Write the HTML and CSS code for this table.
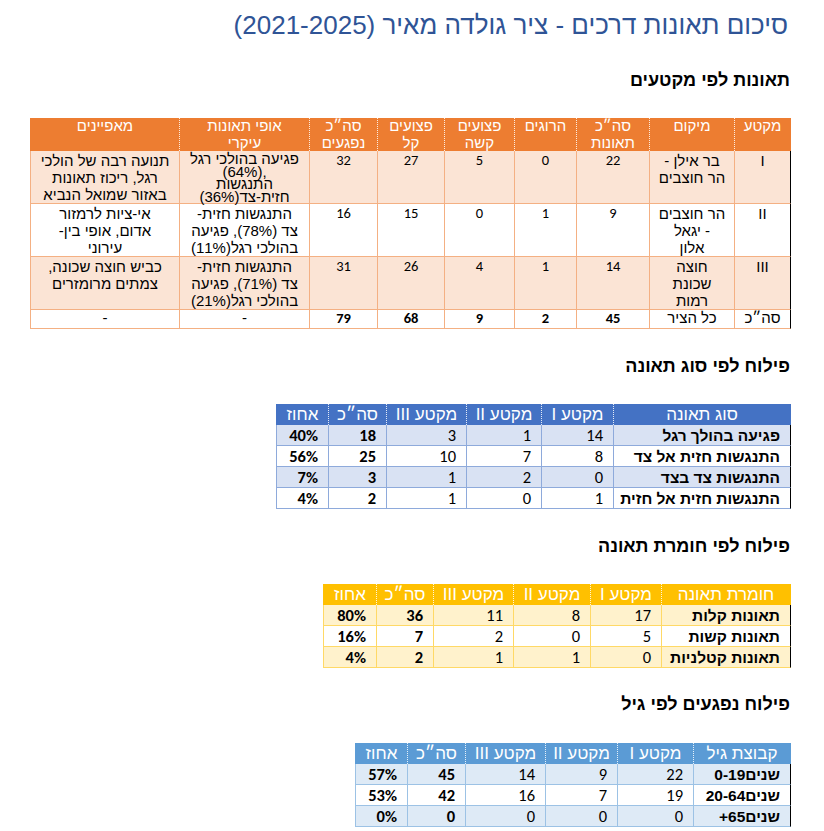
FILE: index.html
```html
<!DOCTYPE html>
<html lang="he" dir="rtl">
<head>
<meta charset="utf-8">
<title>סיכום תאונות דרכים</title>
<link rel="stylesheet" href="styles.css">
</head>
<body>
<main class="page">
  <h1 class="title">סיכום תאונות דרכים - ציר גולדה מאיר (2021-2025)</h1>

  <h2 class="sec sec-first">תאונות לפי מקטעים</h2>
  <table class="tbl t1">
    <colgroup>
      <col style="width:57px"><col style="width:85px"><col style="width:73px"><col style="width:62px"><col style="width:70px"><col style="width:67px"><col style="width:68px"><col style="width:130px"><col style="width:149px">
    </colgroup>
    <thead>
      <tr>
        <th>מקטע</th><th>מיקום</th><th>סה״כ<br>תאונות</th><th>הרוגים</th><th>פצועים<br>קשה</th><th>פצועים<br>קל</th><th>סה״כ<br>נפגעים</th><th>אופי תאונות<br>עיקרי</th><th>מאפיינים</th>
      </tr>
    </thead>
    <tbody>
      <tr class="alt">
        <td>I</td><td>בר אילן -<br>הר חוצבים</td><td class="num">22</td><td class="num">0</td><td class="num">5</td><td class="num">27</td><td class="num">32</td>
        <td class="tight">פגיעה בהולכי רגל<br><bdo dir="ltr">(64%),</bdo><br>התנגשות<br>חזית-צד(36%)</td>
        <td>תנועה רבה של הולכי<br>רגל, ריכוז תאונות<br>באזור שמואל הנביא</td>
      </tr>
      <tr>
        <td>II</td><td>הר חוצבים<br>- יגאל<br>אלון</td><td class="num">9</td><td class="num">1</td><td class="num">0</td><td class="num">15</td><td class="num">16</td>
        <td>התנגשות חזית-<br>צד (78%), פגיעה<br>בהולכי רגל(11%)</td>
        <td>אי-ציות לרמזור<br>אדום, אופי בין-<br>עירוני</td>
      </tr>
      <tr class="alt">
        <td>III</td><td>חוצה<br>שכונת<br>רמות</td><td class="num">14</td><td class="num">1</td><td class="num">4</td><td class="num">26</td><td class="num">31</td>
        <td>התנגשות חזית-<br>צד (71%), פגיעה<br>בהולכי רגל(21%)</td>
        <td>כביש חוצה שכונה,<br>צמתים מרומזרים</td>
      </tr>
      <tr class="total">
        <td>סה״כ</td><td>כל הציר</td><td class="num b">45</td><td class="num b">2</td><td class="num b">9</td><td class="num b">68</td><td class="num b">79</td><td>-</td><td>-</td>
      </tr>
    </tbody>
  </table>

  <h2 class="sec">פילוח לפי סוג תאונה</h2>
  <table class="tbl grid blue t2">
    <colgroup>
      <col style="width:178px"><col style="width:72px"><col style="width:75px"><col style="width:80px"><col style="width:58px"><col style="width:52px">
    </colgroup>
    <thead>
      <tr><th>סוג תאונה</th><th>מקטע I</th><th>מקטע II</th><th>מקטע III</th><th>סה״כ</th><th>אחוז</th></tr>
    </thead>
    <tbody>
      <tr class="alt"><td class="lbl">פגיעה בהולך רגל</td><td class="num">14</td><td class="num">1</td><td class="num">3</td><td class="num b">18</td><td class="num b">40%</td></tr>
      <tr><td class="lbl">התנגשות חזית אל צד</td><td class="num">8</td><td class="num">7</td><td class="num">10</td><td class="num b">25</td><td class="num b">56%</td></tr>
      <tr class="alt"><td class="lbl">התנגשות צד בצד</td><td class="num">0</td><td class="num">2</td><td class="num">1</td><td class="num b">3</td><td class="num b">7%</td></tr>
      <tr><td class="lbl">התנגשות חזית אל חזית</td><td class="num">1</td><td class="num">0</td><td class="num">1</td><td class="num b">2</td><td class="num b">4%</td></tr>
    </tbody>
  </table>

  <h2 class="sec">פילוח לפי חומרת תאונה</h2>
  <table class="tbl grid gold t3">
    <colgroup>
      <col style="width:130px"><col style="width:71px"><col style="width:77px"><col style="width:80px"><col style="width:57px"><col style="width:53px">
    </colgroup>
    <thead>
      <tr><th>חומרת תאונה</th><th>מקטע I</th><th>מקטע II</th><th>מקטע III</th><th>סה״כ</th><th>אחוז</th></tr>
    </thead>
    <tbody>
      <tr class="alt"><td class="lbl">תאונות קלות</td><td class="num">17</td><td class="num">8</td><td class="num">11</td><td class="num b">36</td><td class="num b">80%</td></tr>
      <tr><td class="lbl">תאונות קשות</td><td class="num">5</td><td class="num">0</td><td class="num">2</td><td class="num b">7</td><td class="num b">16%</td></tr>
      <tr class="alt"><td class="lbl">תאונות קטלניות</td><td class="num">0</td><td class="num">1</td><td class="num">1</td><td class="num b">2</td><td class="num b">4%</td></tr>
    </tbody>
  </table>

  <h2 class="sec sec-last">פילוח נפגעים לפי גיל</h2>
  <table class="tbl grid sky t4">
    <colgroup>
      <col style="width:98px"><col style="width:76px"><col style="width:72px"><col style="width:80px"><col style="width:58px"><col style="width:52px">
    </colgroup>
    <thead>
      <tr><th>קבוצת גיל</th><th>מקטע I</th><th>מקטע II</th><th>מקטע III</th><th>סה״כ</th><th>אחוז</th></tr>
    </thead>
    <tbody>
      <tr class="alt"><td class="lbl">שנים0-19</td><td class="num">22</td><td class="num">9</td><td class="num">14</td><td class="num b">45</td><td class="num b">57%</td></tr>
      <tr><td class="lbl">שנים20-64</td><td class="num">19</td><td class="num">7</td><td class="num">16</td><td class="num b">42</td><td class="num b">53%</td></tr>
      <tr class="alt"><td class="lbl">שנים65+</td><td class="num">0</td><td class="num">0</td><td class="num">0</td><td class="num b">0</td><td class="num b">0%</td></tr>
    </tbody>
  </table>
</main>
</body>
</html>
```

FILE: styles.css
```css
html, body {
  margin: 0;
  padding: 0;
  background: #ffffff;
}

body {
  font-family: "Liberation Sans", Arial, sans-serif;
  color: #000000;
}

.page {
  width: 824px;
  box-sizing: border-box;
  padding: 0 33px 0 0;
  direction: rtl;
  overflow: hidden;
}

.title {
  margin: 10px 3px 0 0;
  font-size: 26px;
  line-height: 31px;
  font-weight: normal;
  color: #2F5496;
  white-space: nowrap;
}

.sec {
  margin: 26px 1px 27px 0;
  font-size: 18px;
  line-height: 22px;
  font-weight: bold;
}

.sec-first {
  margin-top: 28px;
}

.sec-last {
  margin-top: 25px;
  margin-bottom: 28px;
}

/* ---------- generic table ---------- */
.tbl {
  border-collapse: separate;
  border-spacing: 0;
  table-layout: fixed;
}

.tbl th {
  font-weight: normal;
  color: #ffffff;
  text-align: center;
  border-left: 1px dotted rgba(255, 255, 255, 0.85);
}

.tbl td {
  border-left: 1px solid;
  border-bottom: 1px solid;
}

.tbl td:first-child {
  border-right: 1px solid;
}

.num {
  font-family: Carlito, Calibri, Lato, "Liberation Sans", sans-serif;
}

.b {
  font-weight: bold;
}

/* ---------- table 1 (orange) ---------- */
.t1 {
  width: 761px;
  font-size: 15px;
}

.t1 th {
  background: #ED7D31;
  line-height: 16.5px;
  padding: 0 3px;
  vertical-align: top;
}

.t1 th:first-child {
  border-right: 1px solid #ED7D31;
}

.t1 th:last-child {
  border-left: 1px solid #ED7D31;
}

.t1 thead tr {
  height: 33px;
}

.t1 tbody tr {
  height: 53px;
}

.t1 tbody tr.total {
  height: 19px;
}

.t1 td {
  border-color: #F4B083;
  text-align: center;
  vertical-align: top;
  line-height: 17px;
  padding: 1px 2px 0;
}

.t1 td.num {
  font-size: 14.5px;
}

.t1 td.tight {
  line-height: 12.5px;
  padding-top: 2px;
}

.t1 tr.alt td {
  background: #FBE4D5;
}

.t1 tr.total td {
  line-height: 16px;
  padding-top: 0;
}

/* ---------- grid tables 2-4 ---------- */
.grid {
  font-size: 17px;
}

.grid th {
  line-height: 19px;
  padding: 0 4px;
  vertical-align: middle;
}

.grid thead tr,
.grid tbody tr {
  height: 21px;
}

.grid td {
  text-align: right;
  vertical-align: middle;
  line-height: 19px;
  padding: 0 10px 0 2px;
  white-space: nowrap;
}

.grid td.lbl {
  font-weight: bold;
  font-size: 15.5px;
}

.grid td.num {
  font-size: 16.5px;
}

/* blue */
.t2 {
  width: 515px;
}

.blue th {
  background: #4472C4;
}

.blue th:first-child {
  border-right: 1px solid #4472C4;
}

.blue th:last-child {
  border-left: 1px solid #4472C4;
}

.blue td {
  border-color: #8EAADB;
}

.blue tr.alt td {
  background: #D9E2F3;
}

/* gold */
.t3 {
  width: 468px;
}

.gold th {
  background: #FFC000;
}

.gold th:first-child {
  border-right: 1px solid #FFC000;
}

.gold th:last-child {
  border-left: 1px solid #FFC000;
}

.gold td {
  border-color: #FFD966;
}

.gold tr.alt td {
  background: #FFF2CC;
}

/* sky */
.t4 {
  width: 436px;
}

.sky th {
  background: #5B9BD5;
}

.sky th:first-child {
  border-right: 1px solid #5B9BD5;
}

.sky th:last-child {
  border-left: 1px solid #5B9BD5;
}

.sky td {
  border-color: #9CC2E5;
}

.sky tr.alt td {
  background: #DEEAF6;
}
```
